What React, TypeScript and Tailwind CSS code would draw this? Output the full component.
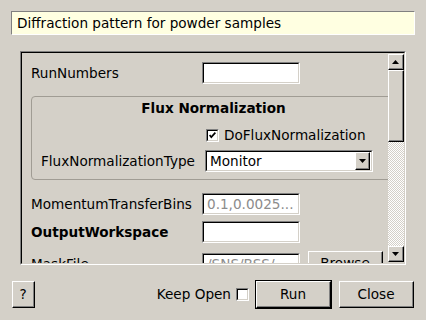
import React from "react";

const font = "font-['DejaVu_Sans','Liberation_Sans',sans-serif]";

// sunken frame like a classic line edit
const Sunken = ({ className = "", children }: { className?: string; children?: React.ReactNode }) => (
  <div className={`border-t border-l border-t-[#808080] border-l-[#808080] border-b border-r border-b-white border-r-white ${className}`}>
    <div className="h-full w-full border-t border-l border-t-black border-l-black border-b border-r border-b-[#d4d0c8] border-r-[#d4d0c8] bg-white flex items-center overflow-hidden">
      {children}
    </div>
  </div>
);

const Raised = ({ className = "", children }: { className?: string; children?: React.ReactNode }) => (
  <div className={`border-t border-l border-t-white border-l-white border-b border-r border-b-black border-r-black ${className}`}>
    <div className="h-full w-full border-b border-r border-b-[#808080] border-r-[#808080] bg-[#d4d0c8] flex items-center justify-center">
      {children}
    </div>
  </div>
);

const Arrow = ({ up }: { up?: boolean }) => (
  <svg width="7" height="4" viewBox="0 0 7 4">
    <path d={up ? "M3.5 0 L7 4 L0 4 Z" : "M0 0 L7 0 L3.5 4 Z"} fill="#000" />
  </svg>
);

const CheckBox = ({ checked }: { checked?: boolean }) => (
  <Sunken className="w-[13px] h-[13px]">
    {checked && (
      <svg width="11" height="11" viewBox="0 0 11 11">
        <path d="M2 5 L4 7.5 L9 2" stroke="#000" strokeWidth="2" fill="none" />
      </svg>
    )}
  </Sunken>
);

export default function App() {
  return (
    <div className={`w-[426px] h-[320px] bg-[#d4d0c8] text-[13.6px] text-black ${font} flex flex-col overflow-hidden`}>
      <div className="mt-[11px] ml-[11px] w-[404px] h-[24px] bg-[#ffffe1] border-t border-l border-t-[#808080] border-l-[#808080] border-b border-r border-b-white border-r-white flex items-center pl-[5px]">
        Diffraction pattern for powder samples
      </div>

      <div className="mt-[16px] ml-[20px] w-[386px] h-[214px] border-t border-l border-t-[#808080] border-l-[#808080] border-b border-r border-b-white border-r-white">
        <div className="h-full w-full border-t border-l border-t-black border-l-black border-b border-r border-b-[#d4d0c8] border-r-[#d4d0c8] flex">
          <div className="flex-1 overflow-hidden">
            <div className="w-[380px] pt-[9px] pl-[9px] flex flex-col">
              <div className="flex items-center h-[22px]">
                <span className="w-[171px]">RunNumbers</span>
                <Sunken className="w-[98px] h-[22px]" />
              </div>

              <div className="mt-[12px] h-[84px] w-[365px] border border-[#a09c94] rounded-[4px] flex flex-col pl-[9px]">
                <div className="text-center font-bold h-[22px] leading-[22px] pr-[9px]">Flux Normalization</div>
                <div className="flex items-center ml-[165px] mt-[6px] gap-[5px]">
                  <CheckBox checked />
                  <span>DoFluxNormalization</span>
                </div>
                <div className="flex items-center mt-[5px]">
                  <span className="w-[164px]">FluxNormalizationType</span>
                  <Sunken className="w-[168px] h-[22px]">
                    <span className="flex-1 pl-[3px]">Monitor</span>
                    <Raised className="w-[15px] h-[18px] mr-[1px]">
                      <Arrow />
                    </Raised>
                  </Sunken>
                </div>
              </div>

              <div className="flex items-center h-[22px] mt-[13px]">
                <span className="w-[171px]">MomentumTransferBins</span>
                <Sunken className="w-[98px] h-[22px]">
                  <span className="pl-[3px] text-[#8c8c8c] whitespace-nowrap">0.1,0.0025...</span>
                </Sunken>
              </div>

              <div className="flex items-center h-[22px] mt-[6px]">
                <span className="w-[171px] font-bold">OutputWorkspace</span>
                <Sunken className="w-[98px] h-[22px]" />
              </div>

              <div className="flex items-center h-[26px] mt-[8px]">
                <span className="w-[171px]">MaskFile</span>
                <Sunken className="w-[98px] h-[22px]">
                  <span className="pl-[3px] text-[#8c8c8c] whitespace-nowrap">/SNS/BSS/...</span>
                </Sunken>
                <Raised className="ml-[8px] w-[75px] h-[26px]">Browse</Raised>
              </div>
            </div>
          </div>

          <div className="w-[16px] flex flex-col mt-[1px] mb-[1px]">
            <Raised className="h-[16px]">
              <Arrow up />
            </Raised>
            <Raised className="h-[72px]" />
            <div className="flex-1 bg-[repeating-conic-gradient(#ffffff_0_25%,#d4d0c8_0_50%)] bg-[length:2px_2px]" />
            <Raised className="h-[16px]">
              <Arrow />
            </Raised>
          </div>
        </div>
      </div>

      <div className="mt-[16px] flex items-center h-[27px] pl-[12px]">
        <Raised className="w-[23px] h-[27px]">?</Raised>
        <div className="flex-1" />
        <span>Keep Open</span>
        <div className="ml-[5px]">
          <CheckBox />
        </div>
        <div className="ml-[6px] border border-black w-[77px] h-[29px]">
          <Raised className="w-full h-full">Run</Raised>
        </div>
        <Raised className="ml-[7px] w-[75px] h-[27px]">Close</Raised>
        <div className="w-[12px]" />
      </div>
    </div>
  );
}
